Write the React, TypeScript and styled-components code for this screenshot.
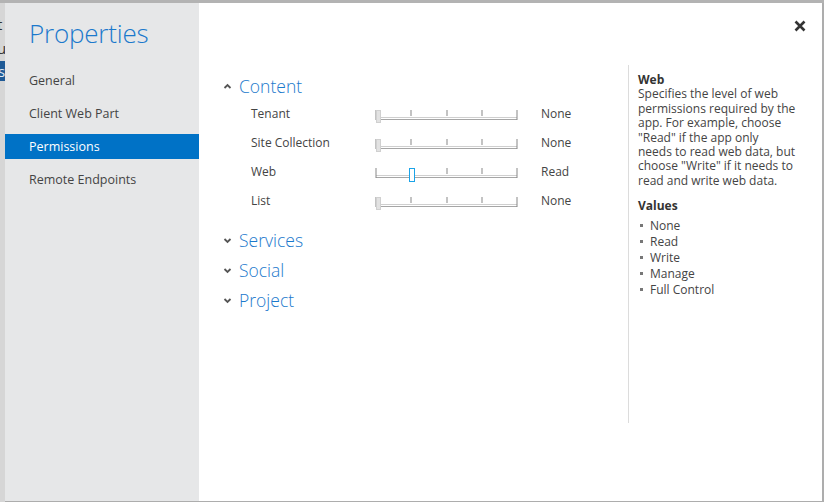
import React from "react";
import styled, { createGlobalStyle } from "styled-components";

const Global = createGlobalStyle`
  html, body { margin: 0; padding: 0; }
  body { font-family: "Open Sans", "Noto Sans", Arial, sans-serif; }
  #root { width: 824px; height: 502px; }
`;

const FONT = `"Open Sans", "Noto Sans", "Liberation Sans", sans-serif`;
const BLUE = "#1b79cc";
const TEXT = "#444444";

const Screen = styled.div`
  position: relative;
  width: 824px;
  height: 502px;
  overflow: hidden;
  background: #adadad;
  display: grid;
  grid-template-rows: 3px 1fr;
`;

const BackdropTop = styled.div`
  background: #b3b3b3;
`;

const BackdropColumn = styled.div`
  width: 5px;
  background: #d6d6d6;
  display: flex;
  flex-direction: column;
  font-family: ${FONT};
  font-size: 15px;
  color: #333;
  overflow: hidden;
  padding-top: 9px;
`;

const BackdropLetter = styled.div<{ $selected?: boolean }>`
  height: ${(p) => (p.$selected ? "20px" : "24px")};
  line-height: ${(p) => (p.$selected ? "20px" : "24px")};
  margin-left: -3px;
  padding-left: ${(p) => (p.$selected ? "1px" : "0")};
  background: ${(p) => (p.$selected ? "#1f5a96" : "transparent")};
  color: ${(p) => (p.$selected ? "#dfe8f2" : "#333")};
  margin-top: ${(p) => (p.$selected ? "1px" : "0")};
`;

const Dialog = styled.div`
  position: absolute;
  top: 3px;
  left: 5px;
  right: 2px;
  bottom: 1px;
  display: grid;
  grid-template-columns: 194px 1fr;
  font-family: ${FONT};
`;

const Nav = styled.nav`
  background: #e6e7e8;
  display: flex;
  flex-direction: column;
  padding-top: 14px;
  gap: 8px;
`;

const Title = styled.h1`
  margin: 0 0 11px 0;
  padding-left: 24px;
  font-size: 26px;
  line-height: 32px;
  font-weight: 300;
  color: ${BLUE};
  letter-spacing: -0.2px;
`;

const NavItem = styled.div<{ $active?: boolean }>`
  height: 25px;
  line-height: 25px;
  padding-left: 24px;
  font-size: 12.5px;
  color: ${(p) => (p.$active ? "#ffffff" : TEXT)};
  background: ${(p) => (p.$active ? "#0072c6" : "transparent")};
`;

const Main = styled.main`
  position: relative;
  background: #ffffff;
  display: grid;
  grid-template-columns: 1fr 194px;
  align-items: start;
  padding-top: 62px;
`;

const CloseButton = styled.button`
  position: absolute;
  top: 14px;
  right: 13px;
  width: 18px;
  height: 18px;
  padding: 0;
  border: 0;
  background: transparent;
  display: flex;
  align-items: center;
  justify-content: center;
`;

const ContentCol = styled.div`
  padding: 6px 0 0 24px;
  display: flex;
  flex-direction: column;
`;

const SectionHeader = styled.div`
  height: 30px;
  display: flex;
  align-items: center;
  gap: 7px;
`;

const SectionTitle = styled.span`
  font-size: 17.5px;
  font-weight: 300;
  color: ${BLUE};
  line-height: 24px;
`;

const Rows = styled.div`
  margin: -2px 0 10px 28px;
  display: flex;
  flex-direction: column;
`;

const Row = styled.div`
  height: 29px;
  display: grid;
  grid-template-columns: 125px 141px auto;
  align-items: center;
  font-size: 12px;
  color: ${TEXT};
`;

const Label = styled.span``;
const Value = styled.span`
  padding-left: 24px;
`;

const Slider = styled.div`
  position: relative;
  height: 16px;
`;

const Track = styled.div`
  position: absolute;
  left: 0;
  right: 0;
  top: 11px;
  height: 1px;
  border-top: 1px solid #cfcfcf;
  border-bottom: 1px solid #a6a6a6;
`;

const Tick = styled.div<{ $end?: boolean }>`
  position: absolute;
  top: 4px;
  width: 1px;
  height: ${(p) => (p.$end ? "10px" : "6px")};
  background: #888888;
  transform: translateX(-0.5px);
`;

const Thumb = styled.div<{ $active?: boolean }>`
  position: absolute;
  top: 4px;
  width: ${(p) => (p.$active ? "4px" : "3px")};
  height: ${(p) => (p.$active ? "12px" : "11px")};
  background: ${(p) => (p.$active ? "#ffffff" : "#e2e2e2")};
  border: 1px solid ${(p) => (p.$active ? "#1aa3e8" : "#d0d0d0")};
`;

const Help = styled.aside`
  border-left: 1px solid #dcdcdc;
  height: 358px;
  box-sizing: border-box;
  padding: 8px 0 0 9px;
  font-size: 12px;
  color: ${TEXT};
`;

const HelpTitle = styled.div`
  font-weight: 700;
  color: #333;
  line-height: 14.4px;
`;

const HelpText = styled.p`
  margin: 0 0 11px 0;
  line-height: 14.4px;
  white-space: pre-line;
`;

const ValueList = styled.ul`
  list-style: none;
  margin: 4px 0 0 0;
  padding: 0;
`;

const ValueItem = styled.li`
  line-height: 16px;
  display: flex;
  align-items: center;
  gap: 7px;
  &::before {
    content: "";
    width: 3px;
    height: 3px;
    background: #777;
    margin-left: 2px;
  }
`;

const Chevron = ({ up }: { up?: boolean }) => (
  <svg width="9" height="9" viewBox="0 0 9 9">
    <polyline
      points={up ? "1.5,6 4.5,3 7.5,6" : "1.5,3 4.5,6 7.5,3"}
      fill="none"
      stroke="#555"
      strokeWidth="1.8"
    />
  </svg>
);

const CloseIcon = () => (
  <svg width="12" height="12" viewBox="0 0 12 12">
    <path d="M1.5 1.5 L10.5 10.5 M10.5 1.5 L1.5 10.5" stroke="#333" strokeWidth="2.6" />
  </svg>
);

const LEVELS = ["None", "Read", "Write", "Manage", "Full Control"];

const PermSlider = ({ level }: { level: number }) => {
  const ticks = [0, 25, 50, 75, 100];
  return (
    <Slider>
      <Track />
      {ticks.map((t) => (
        <Tick key={t} $end={t === 0 || t === 100} style={{ left: `${t}%` }} />
      ))}
      <Thumb
        $active={level > 0}
        style={{ left: level > 0 ? `calc(${level * 25}% - 2px)` : "0px" }}
      />
    </Slider>
  );
};

const rows = [
  { label: "Tenant", level: 0 },
  { label: "Site Collection", level: 0 },
  { label: "Web", level: 1 },
  { label: "List", level: 0 },
];

export default function App() {
  return (
    <Screen>
      <Global />
      <BackdropTop />
      <BackdropColumn>
        <BackdropLetter>t</BackdropLetter>
        <BackdropLetter>u</BackdropLetter>
        <BackdropLetter $selected>s</BackdropLetter>
      </BackdropColumn>
      <Dialog>
        <Nav>
          <Title>Properties</Title>
          <NavItem>General</NavItem>
          <NavItem>Client Web Part</NavItem>
          <NavItem $active>Permissions</NavItem>
          <NavItem>Remote Endpoints</NavItem>
        </Nav>
        <Main>
          <CloseButton aria-label="Close">
            <CloseIcon />
          </CloseButton>
          <ContentCol>
            <SectionHeader>
              <Chevron up />
              <SectionTitle>Content</SectionTitle>
            </SectionHeader>
            <Rows>
              {rows.map((r) => (
                <Row key={r.label}>
                  <Label>{r.label}</Label>
                  <PermSlider level={r.level} />
                  <Value>{LEVELS[r.level]}</Value>
                </Row>
              ))}
            </Rows>
            {["Services", "Social", "Project"].map((s) => (
              <SectionHeader key={s}>
                <Chevron />
                <SectionTitle>{s}</SectionTitle>
              </SectionHeader>
            ))}
          </ContentCol>
          <Help>
            <HelpTitle>Web</HelpTitle>
            <HelpText>
              {
                'Specifies the level of web\npermissions required by the\napp. For example, choose\n"Read" if the app only\nneeds to read web data, but\nchoose "Write" if it needs to\nread and write web data.'
              }
            </HelpText>
            <HelpTitle>Values</HelpTitle>
            <ValueList>
              {LEVELS.map((v) => (
                <ValueItem key={v}>{v}</ValueItem>
              ))}
            </ValueList>
          </Help>
        </Main>
      </Dialog>
    </Screen>
  );
}
